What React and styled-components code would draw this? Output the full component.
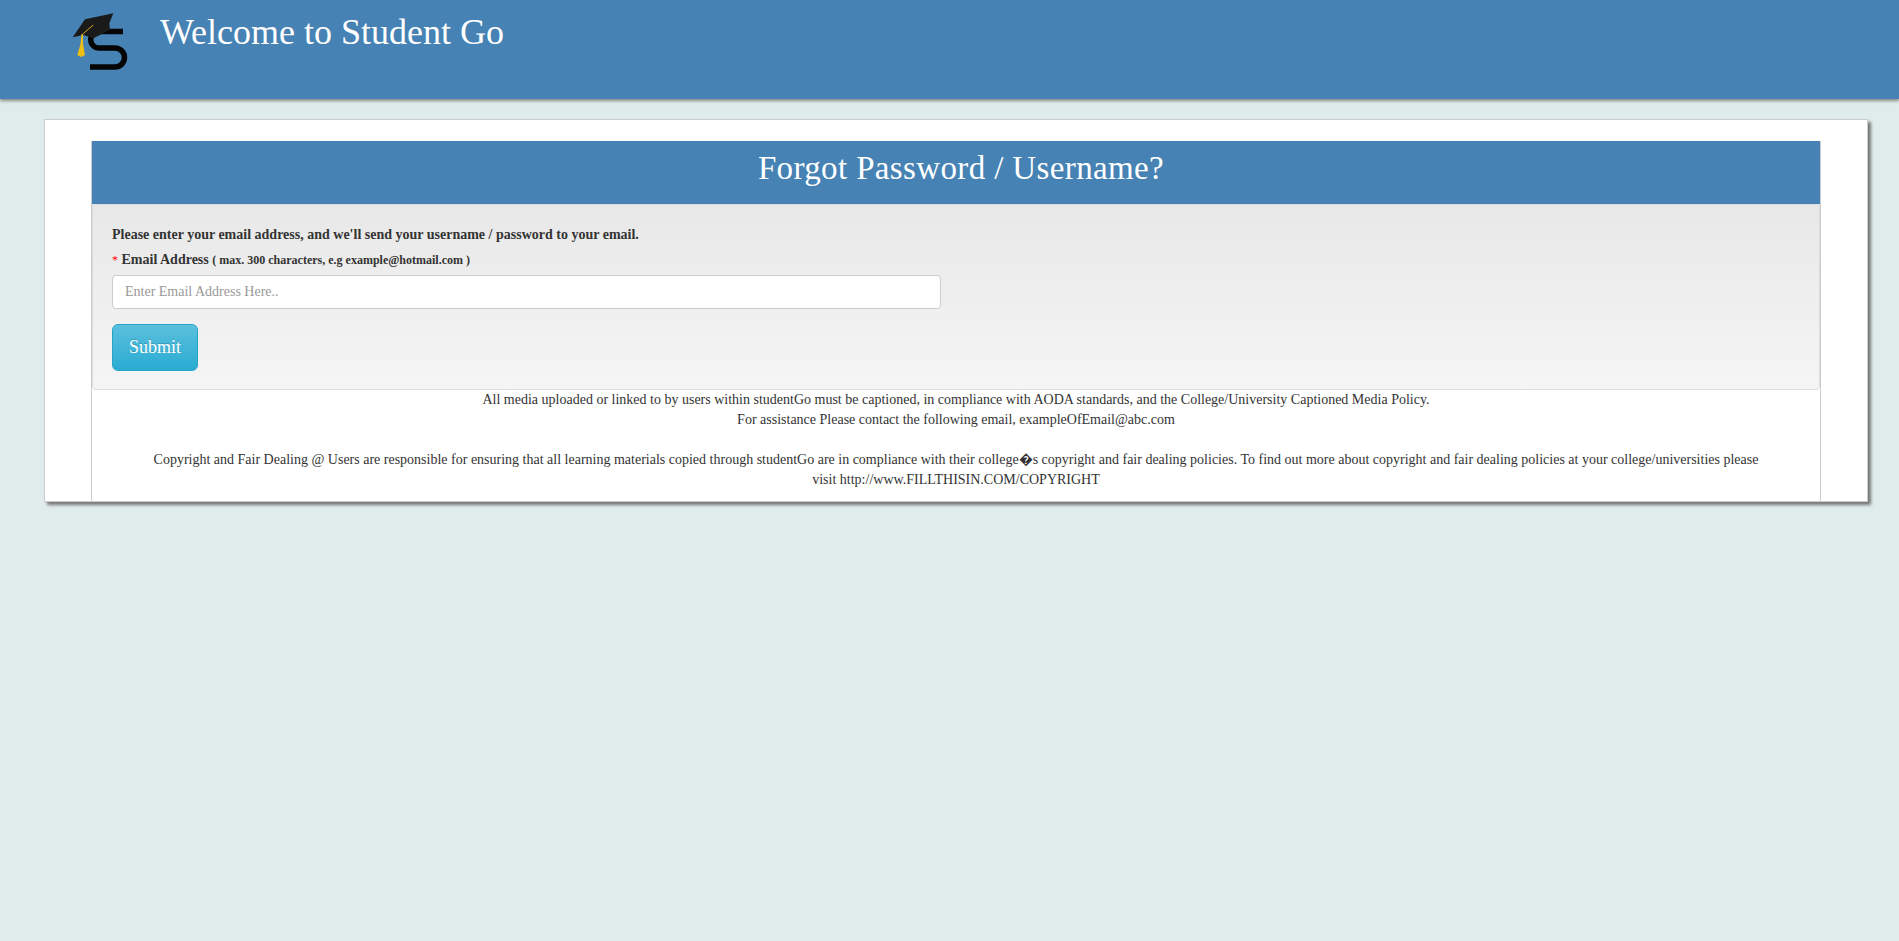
import React from 'react';
import styled, { createGlobalStyle } from 'styled-components';

const GlobalStyle = createGlobalStyle`
	html, body, #root {
		margin: 0;
		height: 100%;
	}

	body {
		background: #e0ecec;
		font-family: "Liberation Serif", "Times New Roman", serif;
		font-size: 14px;
		line-height: 20px;
		color: #333;
	}
`;

const Page = styled.div`
	display: flow-root;
	min-height: 100%;
`;

const Header = styled.header`
	display: flex;
	align-items: flex-start;
	height: 99px;
	padding-left: 70px;
	background: #4682b4;
	box-shadow: 0 2px 3px #888;
`;

const Logo = styled.svg`
	flex: none;
	width: 60px;
	height: 64px;
	margin-top: 12px;
`;

const SiteTitle = styled.h1`
	margin: 12px 0 0 30px;
	font-size: 36px;
	line-height: 40px;
	font-weight: 400;
	color: #fff;
`;

const Card = styled.main`
	margin: 20px 31px 0 44px;
	padding: 21px 46px 0 46px;
	background: #fff;
	border: 1px solid #ccc;
	box-shadow: 3px 3px 3px #777;
`;

const Panel = styled.section`
	border: 1px solid #ccc;
	border-top: 0;
	border-bottom: 0;
`;

const PanelTitle = styled.h2`
	margin: 0;
	height: 63px;
	padding-left: 10px;
	background: #4682b4;
	color: #fff;
	font-size: 33px;
	line-height: 54px;
	font-weight: 400;
	text-align: center;
	letter-spacing: 0.37px;
`;

const Well = styled.form`
	height: 186px;
	box-sizing: border-box;
	padding: 20px 19px 0;
	background: linear-gradient(to bottom, #e8e8e8, #f5f5f5);
	border: 1px solid #dcdcdc;
	border-radius: 0 0 4px 4px;
`;

const Intro = styled.p`
	margin: 0 0 5px;
	font-weight: 700;
	font-size: 14px;
`;

const Label = styled.label`
	display: block;
	margin-bottom: 5px;
	font-weight: 700;
	font-size: 14px;
`;

const Required = styled.span`
	color: #f00;
	font-size: 12px;
	font-weight: 400;
`;

const Hint = styled.small`
	font-size: 12px;
`;

const EmailInput = styled.input`
	display: block;
	box-sizing: border-box;
	width: 829px;
	height: 34px;
	padding: 6px 12px;
	background: #fff;
	border: 1px solid #ccc;
	border-radius: 4px;
	font-family: inherit;
	font-size: 14px;
	color: #555;

	&::placeholder {
		color: #999;
		opacity: 1;
	}
`;

const SubmitButton = styled.button`
	display: block;
	width: 86px;
	height: 47px;
	margin-top: 15px;
	padding: 0;
	background: linear-gradient(to bottom, #5bc0de, #2aabd2);
	border: 1px solid #28a4c9;
	border-radius: 6px;
	color: #fff;
	font-family: inherit;
	font-size: 18px;
	text-shadow: 0 -1px 0 rgba(0, 0, 0, 0.2);
`;

const Notice = styled.footer`
	padding: 0 60px 11px;
	text-align: center;
`;

const Paragraph = styled.p`
	margin: 0 0 20px;

	&:last-child {
		margin: 0;
	}
`;

const App = () => (
	<Page>
		<GlobalStyle />
		<Header>
			<Logo viewBox="0 0 60 64" aria-label="Student Go logo">
				<path
					d="M53 19.500H29a8.250 8.250 0 0 0 0 16.500H45a9.500 9.500 0 0 1 0 19H20"
					fill="none"
					stroke="#050505"
					strokeWidth="5.500"
				/>
				<path d="M2.700 25.300 15 7.300 43.300 1.300 39.300 11.300 40 18 23.300 26.300 13.300 23Z" fill="#1a1a1a" />
				<path d="M12.700 22 23.300 13" stroke="#c9a917" strokeWidth="1" fill="none" />
				<path d="M11.500 22 10.500 32 7.300 43 11 45 15 43 13 32 13 22Z" fill="#eebf12" />
			</Logo>
			<SiteTitle>Welcome to Student Go</SiteTitle>
		</Header>
		<Card>
			<Panel>
				<PanelTitle>Forgot Password / Username?</PanelTitle>
				<Well onSubmit={(e) => e.preventDefault()}>
					<Intro>Please enter your email address, and we'll send your username / password to your email.</Intro>
					<Label htmlFor="email">
						<Required>*</Required> Email Address <Hint>( max. 300 characters, e.g example@hotmail.com )</Hint>
					</Label>
					<EmailInput id="email" type="text" placeholder="Enter Email Address Here.." />
					<SubmitButton type="submit">Submit</SubmitButton>
				</Well>
				<Notice>
					<Paragraph>
						All media uploaded or linked to by users within studentGo must be captioned, in compliance with AODA standards, and the College/University Captioned Media Policy.
						<br />
						For assistance Please contact the following email, exampleOfEmail@abc.com
					</Paragraph>
					<Paragraph>
						Copyright and Fair Dealing @ Users are responsible for ensuring that all learning materials copied through studentGo are in compliance with their college�s copyright and fair dealing policies. To find out more about copyright and fair dealing policies at your college/universities please visit http://www.FILLTHISIN.COM/COPYRIGHT
					</Paragraph>
				</Notice>
			</Panel>
		</Card>
	</Page>
);

export default App;
